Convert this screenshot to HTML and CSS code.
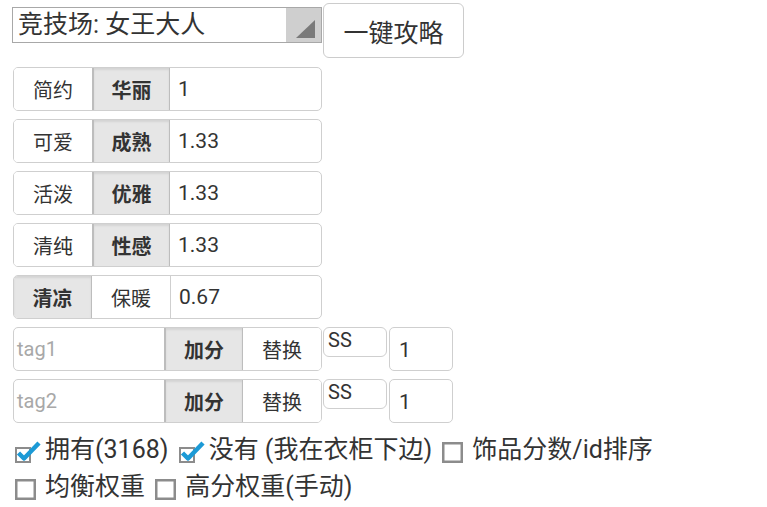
FILE: index.html
```html
<!DOCTYPE html>
<html>
<head>
  <title>搭配评分</title>
  <link rel="stylesheet" href="styles.css">
</head>
<body>
  <div class="top">
    <div class="picker">
      <span class="picker-text">竞技场: 女王大人</span>
      <span class="picker-arrow">
        <svg width="35" height="34" viewBox="0 0 35 34"><polygon points="29,12 29,30 10,30" fill="#7a7a7a"/></svg>
      </span>
    </div>
    <button class="go">一键攻略</button>
  </div>

  <div class="weights">
    <div class="row">
      <span class="seg">简约</span>
      <span class="seg on">华丽</span>
      <span class="val">1</span>
    </div>
    <div class="row">
      <span class="seg">可爱</span>
      <span class="seg on">成熟</span>
      <span class="val">1.33</span>
    </div>
    <div class="row">
      <span class="seg">活泼</span>
      <span class="seg on">优雅</span>
      <span class="val">1.33</span>
    </div>
    <div class="row">
      <span class="seg">清纯</span>
      <span class="seg on">性感</span>
      <span class="val">1.33</span>
    </div>
    <div class="row">
      <span class="seg on">清凉</span>
      <span class="seg">保暖</span>
      <span class="val">0.67</span>
    </div>
  </div>

  <div class="tags">
    <div class="tag-row">
      <div class="row tag-group">
        <span class="tag">tag1</span>
        <span class="seg on">加分</span>
        <span class="seg">替换</span>
      </div>
      <span class="rank">SS</span>
      <span class="num">1</span>
    </div>
    <div class="tag-row">
      <div class="row tag-group">
        <span class="tag">tag2</span>
        <span class="seg on">加分</span>
        <span class="seg">替换</span>
      </div>
      <span class="rank">SS</span>
      <span class="num">1</span>
    </div>
  </div>

  <div class="options">
    <label class="opt"><svg class="box" width="28" height="28" viewBox="0 0 28 28"><rect x="1" y="12" width="14" height="14" fill="#fff" stroke="#8c8c8c" stroke-width="2"/><path d="M3.5 17 L9 22.5 L24 7" fill="none" stroke="#1c9ad6" stroke-width="4.5" stroke-linejoin="round"/></svg>拥有(3168)</label>
    <label class="opt"><svg class="box" width="28" height="28" viewBox="0 0 28 28"><rect x="1" y="12" width="14" height="14" fill="#fff" stroke="#8c8c8c" stroke-width="2"/><path d="M3.5 17 L9 22.5 L24 7" fill="none" stroke="#1c9ad6" stroke-width="4.5" stroke-linejoin="round"/></svg>没有 (我在衣柜下边)</label>
    <label class="opt"><svg class="box empty" width="26" height="28" viewBox="0 0 26 28"><rect x="1.25" y="7.25" width="18.5" height="18.5" fill="#fff" stroke="#8c8c8c" stroke-width="2.5"/></svg>饰品分数/id排序</label>
    <label class="opt"><svg class="box empty" width="26" height="28" viewBox="0 0 26 28"><rect x="1.25" y="7.25" width="18.5" height="18.5" fill="#fff" stroke="#8c8c8c" stroke-width="2.5"/></svg>均衡权重</label>
    <label class="opt"><svg class="box empty" width="26" height="28" viewBox="0 0 26 28"><rect x="1.25" y="7.25" width="18.5" height="18.5" fill="#fff" stroke="#8c8c8c" stroke-width="2.5"/></svg>高分权重(手动)</label>
  </div>
</body>
</html>
```

FILE: styles.css
```css
body {
  margin: 0;
  padding: 3px 0 0 12px;
  font-family: Roboto, "Noto Sans CJK SC", sans-serif;
  color: #333;
  background: #fff;
}

.top {
  display: flex;
  align-items: flex-start;
}

.picker {
  display: flex;
  width: 310px;
  height: 36px;
  margin-top: 4px;
  box-sizing: border-box;
  border: 1px solid #a8a8a8;
}

.picker-text {
  flex: 1;
  padding-left: 5px;
  font-size: 25px;
  line-height: 34px;
}

.picker-arrow {
  width: 35px;
  height: 34px;
  background-color: #cfcfcf;
}

.picker-arrow svg {
  display: block;
}

.go {
  width: 141px;
  height: 55px;
  margin-left: 1px;
  border: 1px solid #ccc;
  border-radius: 6px;
  background: #fff;
  color: #333;
  font-family: inherit;
  font-size: 25px;
  cursor: pointer;
}

.weights {
  margin-top: 9px;
  margin-left: 1px;
}

.row {
  display: flex;
  width: 309px;
  height: 44px;
  margin-bottom: 8px;
  box-sizing: border-box;
  border: 1px solid #cfcfcf;
  border-radius: 5px;
  overflow: hidden;
}

.seg {
  width: 78px;
  box-sizing: border-box;
  display: flex;
  align-items: center;
  justify-content: center;
  font-size: 20px;
  border-left: 1px solid #cfcfcf;
  background: #fff;
}

.seg:first-child {
  border-left: none;
}

.seg.on {
  background: #e6e6e6;
  font-weight: bold;
  border-left: 2px solid #bdbdbd;
  border-right: 1px solid #bdbdbd;
  box-shadow: inset 0 2px 2px rgba(0, 0, 0, 0.08);
}

.seg.on:first-child {
  border-left: none;
}

.seg.on + .val,
.seg.on + .seg {
  border-left: none;
}

.val {
  flex: 1;
  display: flex;
  align-items: center;
  padding-left: 8px;
  font-size: 21px;
  border-left: 1px solid #cfcfcf;
}

.tags {
  margin-left: 1px;
}

.tag-row {
  display: flex;
  align-items: flex-start;
}

.tag-group {
  margin-bottom: 8px;
}

.tag {
  width: 150px;
  display: flex;
  align-items: center;
  padding-left: 3px;
  box-sizing: border-box;
  font-size: 20px;
  color: #a8a8a8;
}

.tag-group .seg {
  width: 79px;
}

.tag-group .seg:last-child {
  flex: 1;
}

.rank {
  width: 64px;
  height: 30px;
  margin-left: 1px;
  box-sizing: border-box;
  border: 1px solid #cfcfcf;
  border-radius: 6px;
  padding-left: 4px;
  font-size: 20px;
  line-height: 24px;
}

.num {
  width: 64px;
  height: 44px;
  margin-left: 2px;
  box-sizing: border-box;
  border: 1px solid #cfcfcf;
  border-radius: 5px;
  padding-left: 9px;
  font-size: 21px;
  line-height: 44px;
}

.options {
  width: 680px;
  margin-left: 3px;
  font-size: 25px;
  line-height: 37px;
}

.opt {
  white-space: nowrap;
  margin-right: 4px;
}

.box {
  vertical-align: -6px;
  margin-right: 2px;
}

.box.empty {
  margin-right: 4px;
}
```
